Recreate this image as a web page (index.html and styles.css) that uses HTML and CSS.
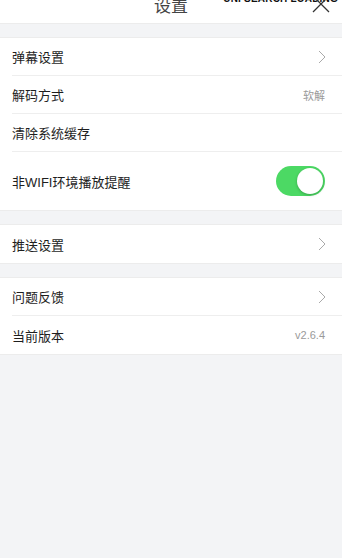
FILE: index.html
```html
<!DOCTYPE html>
<html lang="zh-CN">
<head>
    <meta charset="UTF-8">
    <meta name="viewport" content="width=device-width, initial-scale=1.0">
    <title>设置</title>
    <link rel="stylesheet" href="styles.css">
</head>
<body>
    <div class="header">
        <span class="title">设置</span>
        <span class="status">UNI SEARCH LOADING</span>
        <svg class="close" width="20" height="20" viewBox="0 0 20 20">
            <path d="M2 2 L18 18 M18 2 L2 18" stroke="#333" stroke-width="1.3" fill="none"/>
        </svg>
    </div>

    <div class="gap"></div>

    <div class="group">
        <div class="row">
            <span class="label">弹幕设置</span>
            <svg class="arrow" width="10" height="14" viewBox="0 0 10 14">
                <path d="M2 1 L8 7 L2 13" stroke="#aaa" stroke-width="1" fill="none"/>
            </svg>
        </div>
        <div class="row">
            <span class="label">解码方式</span>
            <span class="value">软解</span>
        </div>
        <div class="row">
            <span class="label">清除系统缓存</span>
        </div>
        <div class="row tall">
            <span class="label">非WIFI环境播放提醒</span>
            <div class="switch on"><div class="knob"></div></div>
        </div>
    </div>

    <div class="gap"></div>

    <div class="group">
        <div class="row">
            <span class="label">推送设置</span>
            <svg class="arrow" width="10" height="14" viewBox="0 0 10 14">
                <path d="M2 1 L8 7 L2 13" stroke="#aaa" stroke-width="1" fill="none"/>
            </svg>
        </div>
    </div>

    <div class="gap"></div>

    <div class="group">
        <div class="row">
            <span class="label">问题反馈</span>
            <svg class="arrow" width="10" height="14" viewBox="0 0 10 14">
                <path d="M2 1 L8 7 L2 13" stroke="#aaa" stroke-width="1" fill="none"/>
            </svg>
        </div>
        <div class="row">
            <span class="label">当前版本</span>
            <span class="value">v2.6.4</span>
        </div>
    </div>
</body>
</html>
```

FILE: styles.css
```css
* {
    margin: 0;
    padding: 0;
    box-sizing: border-box;
    font-family: "Liberation Sans", "Noto Sans CJK SC", sans-serif;
}

html, body {
    height: 100%;
}

body {
    background: #f3f4f6;
    overflow: hidden;
}

.header {
    position: relative;
    height: 24px;
    background: #fff;
    border-bottom: 1px solid #ececec;
}

.title {
    position: absolute;
    left: 0;
    right: 0;
    top: -8px;
    text-align: center;
    font-size: 17px;
    color: #444;
}

.status {
    position: absolute;
    top: -7px;
    right: 4px;
    font-size: 10px;
    font-weight: bold;
    letter-spacing: 0.2px;
    color: #111;
}

.close {
    position: absolute;
    right: 11px;
    top: -6px;
}

.gap {
    height: 14px;
    border-bottom: 1px solid #ececec;
}

.group {
    background: #fff;
    border-bottom: 1px solid #ececec;
}

.row {
    display: flex;
    align-items: center;
    justify-content: space-between;
    height: 38px;
    margin-left: 12px;
    padding-right: 14px;
    border-bottom: 1px solid #eeeeee;
}

.row:last-child {
    border-bottom: none;
}

.row.tall {
    height: 58px;
}

.label {
    font-size: 13px;
    color: #1e1e1e;
}

.value {
    font-size: 11px;
    color: #9a9a9a;
    margin-right: 3px;
}

.arrow {
    margin-right: 1px;
}

.switch {
    width: 49px;
    height: 30px;
    border-radius: 15px;
    background: #e5e5e5;
    padding: 2px;
    display: flex;
    margin-right: 3px;
}

.switch.on {
    background: #4cd964;
    justify-content: flex-end;
}

.knob {
    width: 26px;
    height: 26px;
    border-radius: 50%;
    background: #fff;
    box-shadow: 0 1px 3px rgba(0, 0, 0, 0.25);
}
```
